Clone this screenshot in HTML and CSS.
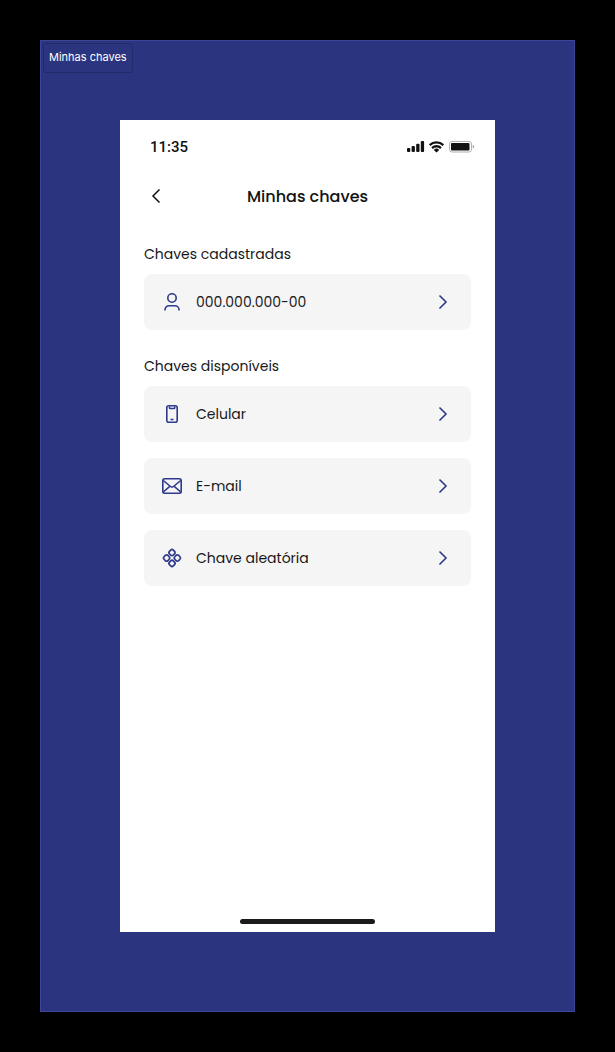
FILE: index.html
```html
<!DOCTYPE html>
<html lang="pt-BR">
<head>
<meta charset="utf-8">
<meta name="viewport" content="width=device-width, initial-scale=1">
<title>Minhas chaves</title>
<link rel="stylesheet" href="styles.css">
</head>
<body>
<div class="board">
  <span class="board-label">Minhas chaves</span>
  <main class="phone">
    <div class="status">
      <time class="clock">11:35</time>
      <svg class="signals" viewBox="0 0 68 14" aria-hidden="true">
        <g fill="#111">
          <rect x="0" y="8" width="3.300" height="4" rx="1"/>
          <rect x="4.600" y="6" width="3.300" height="6" rx="1"/>
          <rect x="9.200" y="3.700" width="3.300" height="8.300" rx="1"/>
          <rect x="13.800" y="1" width="3.300" height="11" rx="1"/>
          <path d="M29.500 12.500 26.800 9.900a3.900 3.900 0 0 1 5.400 0z"/>
        </g>
        <g fill="none" stroke="#111" stroke-width="2.300">
          <path d="M22.700 5.100a9.800 9.800 0 0 1 13.600 0"/>
          <path d="M25.100 8.100a6.200 6.200 0 0 1 8.800 0"/>
        </g>
        <rect x="42.500" y="1.500" width="22" height="10.500" rx="2.500" fill="none" stroke="#b0b0b0"/>
        <rect x="44" y="3" width="18.500" height="7.500" rx="1" fill="#111"/>
        <path d="M65.700 4.800q1.600.5 1.600 1.900t-1.600 1.900z" fill="#b0b0b0"/>
      </svg>
    </div>
    <header class="topbar">
      <button class="back" type="button" aria-label="Voltar">
        <svg class="icon" viewBox="0 0 24 24" aria-hidden="true"><path d="m15.500 5.500-6.500 6.500 6.500 6.500"/></svg>
      </button>
      <h1 class="title">Minhas chaves</h1>
    </header>
    <section class="group">
      <h2 class="heading">Chaves cadastradas</h2>
      <button class="card" type="button">
        <svg class="icon" viewBox="0 0 24 24" aria-hidden="true"><circle cx="12" cy="8" r="4.200"/><path d="M5 20.500v-.7a4 4 0 0 1 4-4h6a4 4 0 0 1 4 4v.7"/></svg>
        <span class="name">000.000.000-00</span>
        <svg class="icon" viewBox="0 0 24 24" aria-hidden="true"><path d="m8.500 5.500 6.500 6.500-6.500 6.500"/></svg>
      </button>
    </section>
    <section class="group">
      <h2 class="heading">Chaves disponíveis</h2>
      <button class="card" type="button">
        <svg class="icon" viewBox="0 0 24 24" aria-hidden="true"><rect x="6.800" y="3.800" width="10.400" height="16.400" rx="2"/><path d="M9.500 4.500v1.200q0 .8.800.8h3.600q.8 0 .8-.8V4.500M10.500 17.500h3"/></svg>
        <span class="name">Celular</span>
        <svg class="icon" viewBox="0 0 24 24" aria-hidden="true"><path d="m8.500 5.500 6.500 6.500-6.500 6.500"/></svg>
      </button>
      <button class="card" type="button">
        <svg class="icon" viewBox="0 0 24 24" aria-hidden="true"><rect x="2.800" y="4.800" width="18.400" height="14.400" rx="1.700"/><path d="m3.300 6.500 7.200 6q1.500 1.200 3 0l7.200-6M3.300 18l6.200-5.400M20.700 18l-6.200-5.400"/></svg>
        <span class="name">E-mail</span>
        <svg class="icon" viewBox="0 0 24 24" aria-hidden="true"><path d="m8.500 5.500 6.500 6.500-6.500 6.500"/></svg>
      </button>
      <button class="card" type="button">
        <svg class="icon" viewBox="0 0 24 24" aria-hidden="true"><g stroke-width="1.700" transform="translate(12 12) rotate(45)"><rect x="-6.500" y="-6.500" width="5.400" height="5.400" rx="1.800"/><rect x="1.100" y="-6.500" width="5.400" height="5.400" rx="1.800"/><rect x="-6.500" y="1.100" width="5.400" height="5.400" rx="1.800"/><rect x="1.100" y="1.100" width="5.400" height="5.400" rx="1.800"/></g></svg>
        <span class="name">Chave aleatória</span>
        <svg class="icon" viewBox="0 0 24 24" aria-hidden="true"><path d="m8.500 5.500 6.500 6.500-6.500 6.500"/></svg>
      </button>
    </section>
    <div class="home"></div>
  </main>
</div>
</body>
</html>
```
FILE: styles.css
```css
* {
  box-sizing: border-box;
}

body {
  margin: 0;
  padding: 40px;
  min-height: 100vh;
  display: flex;
  background: #000;
  color: #18181a;
  font-family: Poppins, Inter, sans-serif;
}

.board {
  position: relative;
  flex: 1;
  display: flex;
  padding: 79px;
  border: 1px solid #3d4598;
  background: #2b357f;
}

.board-label {
  position: absolute;
  top: 2px;
  left: 2px;
  padding: 5px 5px 7px;
  border: 1px solid #222b69;
  border-radius: 3px;
  color: #fff;
  font: 11px/16px Inter, sans-serif;
}

.phone {
  flex: 1;
  min-width: 0;
  display: flex;
  flex-direction: column;
  padding: 16px 24px 8px;
  background: #fff;
}

.status {
  display: flex;
  align-items: center;
  justify-content: space-between;
  margin: 0 -4px 0 6px;
  height: 22px;
}

.clock {
  color: #111;
  font: 500 15px/22px Roboto, sans-serif;
}

.signals {
  width: 68px;
  height: 14px;
}

.icon {
  flex: none;
  display: block;
  width: 24px;
  height: 24px;
  fill: none;
  stroke: currentColor;
  stroke-width: 1.6;
  color: #2e3a8c;
}

.topbar {
  display: grid;
  grid-template-columns: 24px 1fr 24px;
  align-items: start;
  height: 24px;
  margin: 26px 0 36px;
}

.back {
  padding: 0;
  border: 0;
  background: none;
}

.back .icon {
  color: #111;
  stroke-width: 1.5;
}

.title {
  margin: 0;
  color: #111;
  font-size: 16px;
  font-weight: 500;
  line-height: 26px;
  text-align: center;
}

.group {
  display: flex;
  flex-direction: column;
  gap: 16px;
  margin-bottom: 26px;
}

.heading {
  margin: 0 0 -6px;
  font-size: 14px;
  font-weight: 400;
  line-height: 20px;
}

.card {
  display: flex;
  align-items: center;
  gap: 12px;
  height: 56px;
  padding: 0 16px;
  border: 0;
  border-radius: 8px;
  background: #f5f5f5;
  color: inherit;
  font: inherit;
  font-size: 14px;
  line-height: 20px;
  text-align: left;
}

.name {
  flex: 1;
}

.home {
  width: 135px;
  height: 5px;
  margin: auto auto 0;
  border-radius: 3px;
  background: #1a1a1a;
}
```
